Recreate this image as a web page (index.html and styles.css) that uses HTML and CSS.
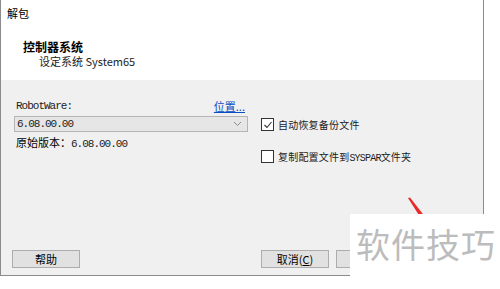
FILE: index.html
```html
<!DOCTYPE html>
<html lang="zh-CN">
<head>
    <meta charset="UTF-8">
    <meta name="viewport" content="width=device-width, initial-scale=1.0">
    <title>解包</title>
    <link rel="stylesheet" href="styles.css">
</head>
<body>
    <div class="dialog">
        <div class="header">
            <div class="caption">解包</div>
            <div class="heading">控制器系统</div>
            <div class="subheading">设定系统 System65</div>
        </div>
        <div class="content">
            <div class="main">
                <div class="left-col">
                    <div class="field-head">
                        <span class="mono">RobotWare:</span>
                        <a class="link" href="#">位置...</a>
                    </div>
                    <div class="combo">
                        <span class="mono">6.08.00.00</span>
                        <svg class="chevron" width="9" height="6" viewBox="0 0 9 6">
                            <path d="M1 1 L4.5 4.5 L8 1" fill="none" stroke="#8a8a8a" stroke-width="1"/>
                        </svg>
                    </div>
                    <div class="version">原始版本：<span class="mono">6.08.00.00</span></div>
                </div>
                <div class="right-col">
                    <label class="check-row">
                        <span class="box">
                            <svg width="10" height="10" viewBox="0 0 10 10">
                                <path d="M1.5 5 L4 7.5 L8.5 2" fill="none" stroke="#333" stroke-width="1.1"/>
                            </svg>
                        </span>
                        <span class="check-text">自动恢复备份文件</span>
                    </label>
                    <label class="check-row">
                        <span class="box"></span>
                        <span class="check-text">复制配置文件到<span class="mono">SYSPAR</span>文件夹</span>
                    </label>
                </div>
            </div>
            <div class="footer">
                <button class="btn">帮助</button>
                <div class="btn-group">
                    <button class="btn">取消(<u>C</u>)</button>
                    <button class="btn"></button>
                    <button class="btn"></button>
                </div>
            </div>
        </div>
    </div>

    <svg class="arrow" width="30" height="26" viewBox="0 0 30 26">
        <path d="M7 2 L9 1.5 L25 22 L21 24 Z" fill="#e52b2b"/>
    </svg>
    <div class="watermark">软件技巧</div>
</body>
</html>
```

FILE: styles.css
```css
body {
    margin: 0;
    background: #fff;
    font-family: "Noto Sans CJK SC", "Noto Sans", sans-serif;
    font-size: 11px;
    color: #000;
    position: relative;
    width: 500px;
    height: 289px;
    overflow: hidden;
}
.dialog {
    width: 482px;
    height: 275px;
    border-left: 1px solid #8c8c8c;
    border-right: 1px solid #8c8c8c;
    border-bottom: 1px solid #8c8c8c;
    display: flex;
    flex-direction: column;
}
.header {
    height: 80px;
    box-sizing: border-box;
    background: #fff;
    padding: 5px 0 0 6px;
}
.caption {
    font-size: 11px;
    line-height: 16px;
}
.heading {
    margin-top: 18px;
    padding-left: 16px;
    font-size: 12px;
    font-weight: bold;
    line-height: 16px;
}
.subheading {
    padding-left: 32px;
    font-size: 11px;
    line-height: 12px;
    color: #222;
}
.content {
    flex: 1;
    background: #f0f0f0;
    display: flex;
    flex-direction: column;
}
.main {
    display: flex;
    gap: 13px;
    padding: 19px 0 0 13px;
}
.mono {
    font-family: "Liberation Mono", "Noto Sans CJK SC", monospace;
    font-size: 11px;
    letter-spacing: -1px;
    color: #222;
}
.left-col {
    width: 234px;
}
.field-head {
    display: flex;
    justify-content: space-between;
    line-height: 14px;
    padding-left: 2px;
}
.link {
    color: #0a4cc4;
    margin-right: 3px;
}
.combo {
    margin-top: 3px;
    height: 16px;
    box-sizing: border-box;
    border: 1px solid #b4b4b4;
    background: #e6e6e6;
    display: flex;
    align-items: center;
    justify-content: space-between;
    padding: 0 5px 0 2px;
}
.version {
    margin-top: 3px;
    line-height: 14px;
    padding-left: 2px;
}
.right-col {
    padding-top: 19px;
    display: flex;
    flex-direction: column;
    gap: 19px;
}
.check-row {
    display: flex;
    align-items: center;
    height: 13px;
    gap: 4px;
}
.check-text {
    font-size: 10px;
    letter-spacing: 0.2px;
    color: #1a1a1a;
}
.check-text .mono {
    font-size: 10px;
    letter-spacing: -0.8px;
}
.box {
    width: 11px;
    height: 11px;
    border: 1px solid #333;
    background: #fff;
    display: flex;
    align-items: center;
    justify-content: center;
}
.footer {
    margin-top: auto;
    display: flex;
    justify-content: space-between;
    padding: 0 4px 7px 11px;
}
.btn-group {
    display: flex;
    gap: 7px;
}
.btn {
    width: 68px;
    height: 18px;
    padding: 0;
    border: 1px solid #adadad;
    background: #e1e1e1;
    font-family: "Noto Sans CJK SC", sans-serif;
    font-size: 11px;
    line-height: 14px;
    color: #000;
}
.arrow {
    position: absolute;
    left: 401px;
    top: 196px;
}
.watermark {
    position: absolute;
    left: 350px;
    top: 214px;
    right: 0;
    bottom: 0;
    background: #fff;
    padding: 9px 0 0 6px;
    font-size: 34px;
    line-height: 42px;
    letter-spacing: 1px;
    color: #bcbcbc;
}
```
